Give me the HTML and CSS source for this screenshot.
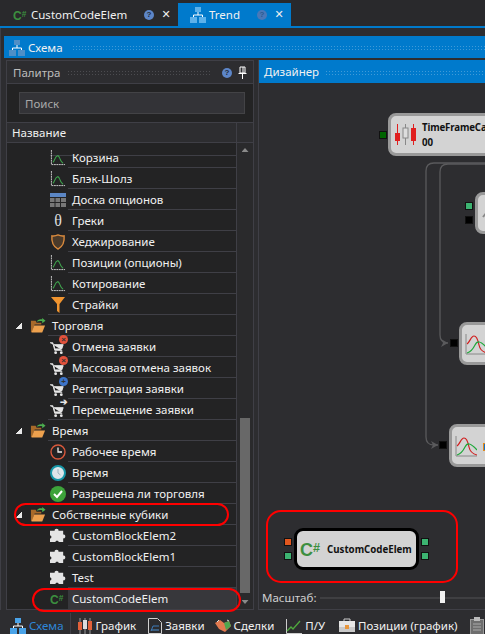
FILE: index.html
```html
<!DOCTYPE html>
<html lang="ru">
<head>
<meta charset="utf-8">
<title>Trend</title>
<link rel="stylesheet" href="styles.css">
</head>
<body>
<svg class="defs" width="0" height="0">
  <defs>
    <symbol id="scheme" viewBox="0 0 16 16"><rect x="5" y="0" width="6" height="5" fill="currentColor"/><rect x="0" y="10" width="7" height="6" fill="currentColor"/><rect x="9" y="10" width="7" height="6" fill="currentColor"/><path d="M8 5v3M3.5 10V8h9v2" stroke="#fff" fill="none"/></symbol>
    <symbol id="chart" viewBox="0 0 17 17"><path d="M1.500 0v15.500H16" stroke="#cfcfcf" fill="none" stroke-dasharray="2 .6"/><path d="M3 13c2-1 2-6 5-7 2.500-.6 2.500 7 6 8" stroke="#3fa34d" stroke-width="1.100" fill="none"/></symbol>
    <symbol id="folder" viewBox="0 0 17 17"><path d="M1 3h5l1 2h5v2H5L2 15H1z" fill="#a86a2a"/><path d="M4.500 8H16l-3 7.500H1.500z" fill="#eda14e"/><path d="M7 4c1-2 3-3 6-2.500V0l3.500 2.800L13 5.500V3.500C11 3 9 3.200 7 4z" fill="#4caf50"/></symbol>
    <symbol id="cart" viewBox="0 0 17 17"><path d="M0 4h3l2 8h8M4 6h10l-1.500 4.500H5z" stroke="#e6e6e6" fill="#e6e6e6" stroke-width="1"/><circle cx="6" cy="14.500" r="1.500" fill="#e6e6e6"/><circle cx="12" cy="14.500" r="1.500" fill="#e6e6e6"/></symbol>
    <symbol id="puzzle" viewBox="0 0 17 17"><path d="M0 3h5c-1-3 5-3 4 0h5v4c3-1 3 5 0 4v4H9c1-2-4-2-3 0H0v-4c2 1 2-4 0-3z" fill="#e4e4e4"/></symbol>
  </defs>
</svg>

<header class="doc-tabs">
  <div class="doc-tab">
    <span class="csharp csharp-tab">C<i>#</i></span>
    <span class="doc-tab-name">CustomCodeElem</span>
    <span class="help">?</span>
    <span class="close">✕</span>
  </div>
  <div class="doc-tab doc-tab-active">
    <svg class="ico ico-tab"><use href="#scheme"/></svg>
    <span class="doc-tab-name">Trend</span>
    <span class="help help-dim">?</span>
    <span class="close">✕</span>
  </div>
</header>

<main class="workspace">
  <div class="scheme-title">
    <svg class="ico ico-title"><use href="#scheme"/></svg>
    <span>Схема</span>
    <span class="grip"></span>
  </div>

  <div class="panes">
    <section class="palette">
      <div class="palette-head">
        <span>Палитра</span>
        <span class="grip grip-dark"></span>
        <span class="help">?</span>
        <svg class="pin" viewBox="0 0 9 13" width="9" height="13"><path d="M2 1h5v6H2zM0.500 7.500h8M4.500 8v5M5 1v6" stroke="#fff" fill="none"/></svg>
      </div>
      <div class="search-wrap"><div class="search">Поиск</div></div>
      <div class="col-head"><span>Название</span><span class="col-spare"></span></div>
      <div class="tree-wrap">
        <div class="tree">
          <div class="row row-stub"><span class="label"></span></div>
          <div class="row"><svg class="ico"><use href="#chart"/></svg><span class="label">Корзина</span></div>
          <div class="row"><svg class="ico"><use href="#chart"/></svg><span class="label">Блэк-Шолз</span></div>
          <div class="row"><svg class="ico" viewBox="0 0 16 16"><rect y="1" width="16" height="4" fill="#5b86c4"/><path d="M0 6h4.500v4H0zM5.500 6h4.500v4H5.500zM11 6h5v4h-5zM0 11h4.500v4H0zM5.500 11h4.500v4H5.500zM11 11h5v4h-5z" fill="#777"/></svg><span class="label">Доска опционов</span></div>
          <div class="row"><span class="ico theta">θ</span><span class="label">Греки</span></div>
          <div class="row"><svg class="ico" viewBox="0 0 16 17"><path d="M1.500 2c3 .5 4.500 0 6.500-1 2 1 3.500 1.500 6.500 1 .5 6-.5 11-6.500 14C2 13 1 8 1.500 2z" fill="#4a3a2a" stroke="#d98a3d" stroke-width="1.500"/></svg><span class="label">Хеджирование</span></div>
          <div class="row"><svg class="ico"><use href="#chart"/></svg><span class="label">Позиции (опционы)</span></div>
          <div class="row"><svg class="ico"><use href="#chart"/></svg><span class="label">Котирование</span></div>
          <div class="row"><svg class="ico" viewBox="0 0 16 16"><path d="M1 0h14L9.500 7v9L7 14V7z" fill="#f0942f"/></svg><span class="label">Страйки</span></div>

          <div class="row row-folder"><span class="arrow"></span><svg class="ico"><use href="#folder"/></svg><span class="label">Торговля</span></div>
          <div class="row"><span class="ico ico-stack"><svg class="ico"><use href="#cart"/></svg><span class="dot dot-red">×</span></span><span class="label">Отмена заявки</span></div>
          <div class="row"><span class="ico ico-stack"><svg class="ico"><use href="#cart"/></svg><span class="dot dot-red">×</span></span><span class="label">Массовая отмена заявок</span></div>
          <div class="row"><span class="ico ico-stack"><svg class="ico"><use href="#cart"/></svg><span class="dot dot-blue">+</span></span><span class="label">Регистрация заявки</span></div>
          <div class="row row-last"><span class="ico ico-stack"><svg class="ico"><use href="#cart"/></svg><span class="dot dot-arrow">➔</span></span><span class="label">Перемещение заявки</span></div>

          <div class="row row-folder"><span class="arrow"></span><svg class="ico"><use href="#folder"/></svg><span class="label">Время</span></div>
          <div class="row"><svg class="ico" viewBox="0 0 16 16"><circle cx="8" cy="8" r="7" fill="none" stroke="#d9583b" stroke-width="1.400"/><path d="M8 3.500V8h4" fill="none" stroke="#eee" stroke-width="1.300"/></svg><span class="label">Рабочее время</span></div>
          <div class="row"><svg class="ico" viewBox="0 0 16 16"><circle cx="8" cy="8" r="7" fill="#dfe6ea" stroke="#1797a8" stroke-width="2"/><path d="M8 4v4l2.500 2" fill="none" stroke="#9db4c0"/></svg><span class="label">Время</span></div>
          <div class="row row-last"><svg class="ico" viewBox="0 0 16 16"><circle cx="8" cy="8" r="8" fill="#3da33a"/><path d="M4 8l3 3 5-6" fill="none" stroke="#fff" stroke-width="2"/></svg><span class="label">Разрешена ли торговля</span></div>

          <div class="row row-folder"><span class="arrow"></span><svg class="ico"><use href="#folder"/></svg><span class="label">Собственные кубики</span></div>
          <div class="row"><svg class="ico"><use href="#puzzle"/></svg><span class="label">CustomBlockElem2</span></div>
          <div class="row"><svg class="ico"><use href="#puzzle"/></svg><span class="label">CustomBlockElem1</span></div>
          <div class="row"><svg class="ico"><use href="#puzzle"/></svg><span class="label">Test</span></div>
          <div class="row row-selected"><span class="ico csharp csharp-tree">C<i>#</i></span><span class="label">CustomCodeElem</span></div>
        </div>
        <div class="scrollbar">
          <span class="sb-arrow sb-up"></span>
          <span class="sb-track"><span class="sb-thumb"></span></span>
          <span class="sb-arrow sb-down"></span>
        </div>
      </div>
    </section>

    <section class="designer">
      <div class="designer-head"><span>Дизайнер</span><span class="grip"></span></div>
      <div class="canvas">
        <svg class="wires" width="227" height="527" viewBox="258 83 227 527">
          <path d="M485 163H433q-8 0-8 8V437q0 8 8 8h4" fill="none" stroke="#5a5a5c" stroke-width="1.300"/>
          <path d="M485 164H447q-8 0-8 8V335q0 8 8 8h-1" fill="none" stroke="#5a5a5c" stroke-width="1.300"/>
          <path d="M430 441l7 4-7 4 2-4zM440 339l7 4-7 4 2-4z" fill="#5a5a5c"/>
        </svg>

        <div class="node node-time">
          <svg class="candles" viewBox="0 0 23 22" width="23" height="22"><path d="M3.500 0v21M19.500 0v21" stroke="#e01f1f"/><path d="M11.500 0v21" stroke="#888"/><rect x="1" y="9" width="5" height="8" fill="#e01f1f"/><rect x="9" y="4" width="5" height="10" fill="#ddd" stroke="#888"/><rect x="17" y="4" width="5" height="13" fill="#e01f1f"/></svg>
          <div class="node-text"><b>TimeFrameCa</b><b>00</b></div>
        </div>
        <span class="port port-dark port-a"></span>

        <div class="node node-b"><svg class="mini" viewBox="0 0 20 20" width="20" height="20"><path d="M2 14L10 4M10 4l6 6" stroke="#888" stroke-width="2" fill="none"/></svg></div>
        <span class="port port-green port-b1"></span>
        <span class="port port-black port-b2"></span>

        <div class="node node-c"><svg class="mini" viewBox="0 0 22 22" width="22" height="22"><path d="M1 1v20h21" stroke="#888" fill="none"/><path d="M2 11c3-2 4-8 7-8s4 4 5 9 4 7 8 8" stroke="#d01f1f" stroke-width="1.200" fill="none"/><path d="M2 20c4-1 6-4 8-8s5-5 12 3" stroke="#1fa83a" stroke-width="1.200" fill="none"/></svg></div>
        <span class="port port-black port-c"></span>

        <div class="node node-d"><svg class="mini" viewBox="0 0 22 22" width="22" height="22"><path d="M1 1v20h21" stroke="#888" fill="none"/><path d="M2 11c3-2 4-8 7-8s4 4 5 9 4 7 8 8" stroke="#d01f1f" stroke-width="1.200" fill="none"/><path d="M2 20c4-1 6-4 8-8s5-5 12 3" stroke="#1fa83a" stroke-width="1.200" fill="none"/></svg></div>
        <span class="port port-black port-d"></span>
        <span class="port port-out"></span>

        <div class="node node-code">
          <span class="csharp csharp-node">C<i>#</i></span>
          <b>CustomCodeElem</b>
        </div>
        <span class="port port-orange port-e1"></span>
        <span class="port port-green port-e2"></span>
        <span class="port port-green port-e3"></span>
        <span class="port port-green port-e4"></span>
        <span class="ring ring-node"></span>

        <div class="scale">
          <span>Масштаб:</span>
          <span class="slider"><span class="slider-thumb"></span></span>
        </div>
      </div>
    </section>
  </div>
</main>

<footer class="bottom-tabs">
  <div class="b-tab b-tab-active"><svg class="ico ico-bscheme"><use href="#scheme"/></svg><span>Схема</span></div>
  <div class="b-tab b-tab-tight"><svg class="ico" viewBox="0 0 16 16"><path d="M3 0v16M8 0v16M13 0v16" stroke="#999"/><rect x="1" y="4" width="4" height="8" fill="#e2613a"/><rect x="6" y="2" width="4" height="9" fill="#ddd"/><rect x="11" y="3" width="4" height="9" fill="#e2613a"/></svg><span>График</span></div>
  <div class="b-tab b-tab-tighter"><svg class="ico ico-order" viewBox="0 0 14 16"><path d="M.5.500h9l4 4v11H.5z" fill="#2b2b2e" stroke="#d0d0d0"/><path d="M3 12h8" stroke="#4a90d0"/><path d="M3 13l2-5h6" stroke="#3d7ab8" fill="none"/></svg><span>Заявки</span></div>
  <div class="b-tab b-tab-tight"><svg class="ico" viewBox="0 0 16 16"><path d="M0 5l5-3 4 3 5-2 2 5-6 6-6-3z" fill="#e2794f"/><path d="M9 5l5-2 2 5-5 4z" fill="#4da64f"/><path d="M2 4l2-2M12 2l2 1" stroke="#ddd"/></svg><span>Сделки</span></div>
  <div class="b-tab b-tab-wide"><svg class="ico" viewBox="0 0 16 16"><path d="M.5 1v14.500H16" stroke="#ccc" fill="none"/><path d="M1 13l4-4 2 2 7-8" stroke="#4fa83d" stroke-width="1.300" fill="none"/></svg><span>П/У</span></div>
  <div class="b-tab"><svg class="ico" viewBox="0 0 16 16"><path d="M5 3V1h6v2" stroke="#ccc" fill="none"/><rect y="3" width="16" height="6" fill="#e6e6e6"/><rect y="9" width="16" height="5" fill="#c9c9c9"/><rect x="6" y="7" width="4" height="4" fill="#e8963c"/></svg><span>Позиции (график)</span></div>
  <div class="b-tab"><svg class="ico ico-clip" viewBox="0 0 14 18"><rect x=".5" y="2.500" width="13" height="15" fill="#6e6e6e" stroke="#9a9a9a"/><rect x="4" y="0" width="6" height="4" fill="#bbb"/><path d="M3 7h8M3 10h8M3 13h8" stroke="#aaa"/></svg></div>
</footer>

<span class="ring ring-folder"></span>
<span class="ring ring-leaf"></span>
</body>
</html>
```
FILE: styles.css
```css
* { box-sizing: border-box; }
html, body { margin: 0; height: 100%; }
body {
  width: 485px; height: 634px; overflow: hidden; position: relative;
  display: flex; flex-direction: column;
  background: #2d2d30; color: #f1f1f1;
  font: 11.500px/16px "Noto Sans", Roboto, sans-serif;
}
.defs { position: absolute; }
.ico { width: 16px; height: 16px; flex: none; display: block; }
i { font-style: normal; }

.csharp { font-family: "Liberation Sans", sans-serif; font-weight: 700; color: #3c8f3f; }
.csharp i { font-size: .7em; vertical-align: .3em; }
.csharp-tab { font-size: 12px; width: 16px; margin-right: 2px; }
.csharp-tree { font-size: 12px; line-height: 14px; }
.csharp-node { font-size: 18px; line-height: 18px; margin-right: 7px; }

.doc-tabs {
  height: 28px; flex: none; padding-top: 3px; padding-left: 13px;
  display: flex; background: #29292c; border-bottom: 2px solid #007acc;
}
.doc-tab { display: flex; align-items: center; width: 165px; }
.doc-tab-name { flex: 1; }
.doc-tab-active { width: 113px; padding-left: 12px; background: #007acc; }
.ico-tab { color: #5db1ea; margin-right: 3px; }
.help {
  width: 10px; height: 10px; flex: none; border-radius: 50%;
  background: #5d86c8; color: #1f2a3a; font: 700 8px/10px "Liberation Sans", sans-serif; text-align: center;
}
.help-dim { background: #4a78b8; color: #2a5a90; }
.close { width: 12px; margin: 0 6px 0 6px; font: 11px/12px "DejaVu Sans", sans-serif; color: #eee; text-align: center; }

.workspace { flex: 1; min-height: 0; padding: 8px 0 0 4px; display: flex; flex-direction: column; border-left: 1px solid #3f3f46; }
.scheme-title {
  height: 22px; flex: none; display: flex; align-items: center; gap: 3px;
  padding: 1px 0 0 5px; background: #007acc; margin-left: -1px;
}
.ico-title { color: #4f8fc7; }
.grip {
  flex: 1; height: 5px; margin: 0 0 0 6px;
  background-image: radial-gradient(circle, #3f9ad8 .7px, transparent .8px);
  background-size: 3px 3px;
}
.grip-dark { background-image: radial-gradient(circle, #4c4c50 .7px, transparent .8px); margin: 0 10px 0 7px; }

.panes { flex: 1; min-height: 0; display: flex; padding-top: 2px; gap: 4px; }

.palette {
  width: 248px; flex: none; margin: 0 0 0 1px; height: 550px;
  display: flex; flex-direction: column; border: 1px solid #3f3f46;
  background: #232324;
}
.palette-head {
  height: 23px; flex: none; padding: 1px 6px 0; display: flex; align-items: center;
  background: #2d2d30; color: #bdbdbd; border-bottom: 1px solid #3f3f46;
}
.palette-head .help { margin-right: 6px; }
.search-wrap { height: 38px; flex: none; padding: 8px 8px 0 12px; }
.search { height: 22px; padding: 3px 5px 1px; background: #333337; border: 1px solid #434346; color: #a9a9a9; }
.col-head {
  height: 21px; flex: none; display: flex; align-items: center; padding-left: 5px;
  background: #2d2d30; border-top: 1px solid #3f3f46; border-bottom: 1px solid #3f3f46;
  justify-content: space-between;
}
.col-spare { width: 17px; height: 100%; border-left: 1px solid #3f3f46; }

.tree-wrap { flex: 1; min-height: 0; display: flex; }
.tree { flex: 1; min-width: 0; overflow: hidden; }
.row { height: 21px; display: flex; align-items: center; padding-left: 43px; }
.row .ico { margin-right: 2px; }
.row-stub { height: 4px; }
.label { flex: 1; height: 21px; padding: 1px 0 0 4px; line-height: 19px; border-bottom: 1px solid #3f3f46; white-space: nowrap; }
.row-folder { padding-left: 8px; }
.row-folder .arrow { width: 7px; height: 7px; margin-right: 8px; flex: none; background: linear-gradient(to bottom right, transparent 50%, #e8e8e8 51%); }
.row-folder .label { box-shadow: 0 -1px 0 #3f3f46; }
.row-selected .label { background: #37373b; border-bottom: 0; }
.theta { font: 16px/16px "Liberation Serif", serif; color: #ddd; text-align: center; }
.ico-stack { position: relative; }
.ico-stack .dot { position: absolute; right: -2px; top: -4px; width: 9px; height: 9px; border-radius: 50%; font: 700 8px/9px "Liberation Sans", sans-serif; text-align: center; color: #333; }
.dot-red { background: #e3523c; }
.dot-blue { background: #3d74c8; }
.ico-stack .dot-arrow { color: #e6e6e6; font-size: 9px; }

.scrollbar { width: 17px; flex: none; display: flex; flex-direction: column; align-items: center; background: #2a2a2c; border-left: 1px solid #3f3f46; }
.sb-arrow { flex: none; width: 7px; height: 4px; margin: 5px 0; }
.sb-up { clip-path: polygon(50% 0, 100% 100%, 0 100%); background: #8a8a8a; }
.sb-down { clip-path: polygon(0 0, 100% 0, 50% 100%); background: #8a8a8a; }
.sb-track { flex: 1; width: 10px; padding-top: 261px; display: flex; }
.sb-thumb { flex: 1; height: 175px; background: #686868; }

.designer { flex: 1; min-width: 0; height: 550px; display: flex; flex-direction: column; border-left: 1px solid #3f3f46; border-bottom: 1px solid #3f3f46; }
.designer-head { height: 23px; flex: none; display: flex; align-items: center; padding: 1px 0 0 5px; background: #007acc; }
.canvas { flex: 1; position: relative; overflow: hidden; background: #2d2d30; }
.wires { position: absolute; left: 0; top: 0; }

/* canvas items: origin 259,83 */
.node { position: absolute; display: flex; align-items: center; height: 43px; background: #d3d3d3; border: 3px solid #999; border-radius: 8px; color: #111; }
.node b { font: 700 9.700px/15px "Noto Sans", sans-serif; display: block; white-space: nowrap; }
.node-time { left: 129px; top: 30px; width: 140px; padding-left: 3px; gap: 5px; }
.node-time b { letter-spacing: -.15px; }
.node-b { left: 216px; top: 109px; width: 40px; height: 42px; padding-left: 3px; }
.node-c { left: 200px; top: 239px; width: 50px; padding-left: 3px; }
.node-d { left: 190px; top: 341px; width: 60px; padding-left: 3px; }
.node-code { left: 35px; top: 445px; width: 125px; height: 42px; padding-left: 3px; border-color: #000; border-radius: 9px; }
.port { position: absolute; width: 8px; height: 8px; border: 1px solid #111; }
.port-dark { background: #006400; }
.port-green { background: #3cb371; }
.port-black { background: #000; }
.port-orange { background: #e2571e; }
.port-a { left: 120px; top: 48px; }
.port-b1 { left: 206px; top: 119px; }
.port-b2 { left: 206px; top: 133px; }
.port-c { left: 191px; top: 256px; }
.port-d { left: 180px; top: 358px; }
.port-out { left: 224px; top: 360px; background: #1c6fc0; border-color: #e08a1e; }
.port-e1 { left: 25px; top: 455px; }
.port-e2 { left: 25px; top: 469px; }
.port-e3 { left: 162px; top: 455px; }
.port-e4 { left: 162px; top: 469px; }
.ring { position: absolute; border: 2px solid #f00; pointer-events: none; }
.ring-node { left: 7px; top: 427px; width: 192px; height: 73px; border-radius: 15px; }
.ring-folder { left: 14px; top: 503px; width: 215px; height: 23px; border-radius: 12px; }
.ring-leaf { left: 32px; top: 588px; width: 209px; height: 24px; border-radius: 12px; }
.scale { position: absolute; left: 3px; right: 0; top: 507px; display: flex; align-items: center; gap: 4px; color: #d0d0d0; }
.slider { flex: 1; height: 2px; background: #3f3f42; position: relative; }
.slider-thumb { position: absolute; left: 120px; top: -6px; width: 5px; height: 12px; background: #f1f1f1; }

.bottom-tabs { height: 24px; flex: none; display: flex; align-items: center; padding: 7px 0 0 10px; }
.b-tab { display: flex; align-items: center; gap: 3px; margin-right: 13px; flex: none; white-space: nowrap; }
.b-tab-tight { margin-right: 12px; }
.b-tab-tighter { margin-right: 10px; }
.b-tab-wide { margin-right: 14px; }
.b-tab-active { color: #2e86d8; position: relative; }
.b-tab-active::after { content: ""; position: absolute; right: -7px; top: -5px; bottom: -3px; width: 1px; background: #3f3f46; }
.ico-bscheme { color: #4aa3e8; }
.ico-order { width: 14px; }
.ico-clip { width: 14px; height: 18px; }
```
